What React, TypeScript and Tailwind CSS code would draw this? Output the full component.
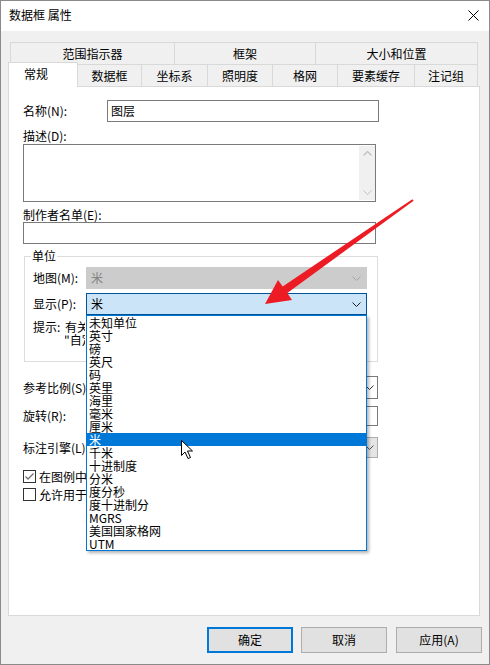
import React from "react";

const Chevron = ({ color = "#333" }: { color?: string }) => (
  <svg width="9" height="5" viewBox="0 0 9 5" className="shrink-0">
    <polyline points="0.5,0.5 4.5,4.5 8.5,0.5" fill="none" stroke={color} strokeWidth="1" />
  </svg>
);

const units = [
  "未知单位",
  "英寸",
  "磅",
  "英尺",
  "码",
  "英里",
  "海里",
  "毫米",
  "厘米",
  "米",
  "千米",
  "十进制度",
  "分米",
  "度分秒",
  "度十进制分",
  "MGRS",
  "美国国家格网",
  "UTM",
];

export default function App() {
  return (
    <div className="relative w-[490px] h-[665px] border border-[#8a8a8a] bg-[#f0f0f0] flex flex-col overflow-hidden font-['Noto_Sans_CJK_SC','Liberation_Sans',sans-serif] text-[12px] text-black">
      {/* Title bar */}
      <div className="h-[30px] bg-white flex items-center justify-between pl-[8px] pr-[10px] shrink-0">
        <span className="leading-[16px] -mt-[2px]">数据框 属性</span>
        <svg width="11" height="11" viewBox="0 0 11 11" className="-mt-[2px]">
          <line x1="0.5" y1="0.5" x2="10.5" y2="10.5" stroke="#000" strokeWidth="1" />
          <line x1="10.5" y1="0.5" x2="0.5" y2="10.5" stroke="#000" strokeWidth="1" />
        </svg>
      </div>

      {/* Tabs */}
      <div className="mt-[11px] ml-[7px] flex flex-col">
        <div className="flex ml-[2px] h-[22px]">
          <div className="w-[165px] border-t border-l border-r border-[#d9d9d9] flex items-center justify-center leading-[16px]">范围指示器</div>
          <div className="w-[141px] border-t border-r border-[#d9d9d9] flex items-center justify-center leading-[16px]">框架</div>
          <div className="w-[162px] border-t border-r border-[#d9d9d9] flex items-center justify-center leading-[16px]">大小和位置</div>
        </div>
        <div className="flex h-[22px]">
          <div className="relative z-10 w-[70px] h-[25px] -mt-[2px] bg-white border-t border-l border-r border-[#d9d9d9] pt-[3px] pl-[15px] leading-[16px]">常规</div>
          <div className="w-[64px] border-t border-r border-[#d9d9d9] flex items-center justify-center leading-[16px]">数据框</div>
          <div className="w-[66px] border-t border-r border-[#d9d9d9] flex items-center justify-center leading-[16px]">坐标系</div>
          <div className="w-[65px] border-t border-r border-[#d9d9d9] flex items-center justify-center leading-[16px]">照明度</div>
          <div className="w-[65px] border-t border-r border-[#d9d9d9] flex items-center justify-center leading-[16px]">格网</div>
          <div className="w-[77px] border-t border-r border-[#d9d9d9] flex items-center justify-center leading-[16px]">要素缓存</div>
          <div className="w-[63px] border-t border-r border-[#d9d9d9] flex items-center justify-center leading-[16px]">注记组</div>
        </div>
      </div>

      {/* Panel */}
      <div className="ml-[7px] w-[472px] h-[530px] shrink-0 border border-[#d9d9d9] bg-white pl-[14px] pt-[13px]">
        {/* Name */}
        <div className="flex items-center h-[22px]">
          <span className="w-[84px] leading-[16px]">名称(N):</span>
          <div className="w-[272px] h-[22px] border border-[#7a7a7a] pl-[3px] flex items-center leading-[16px]">图层</div>
        </div>
        <div className="mt-[6px] leading-[16px] h-[16px]">描述(D):</div>
        <div className="w-[353px] h-[58px] border border-[#7a7a7a] flex justify-end py-[1px]">
          <div className="w-[16px] h-full bg-[#f0f0f0] flex flex-col items-center justify-between py-[5px]">
            <svg width="9" height="5" viewBox="0 0 9 5">
              <polyline points="0.5,4.5 4.5,0.5 8.5,4.5" fill="none" stroke="#bfbfbf" strokeWidth="1.2" />
            </svg>
            <Chevron color="#bfbfbf" />
          </div>
        </div>
        <div className="mt-[5px] leading-[15px] h-[15px]">制作者名单(E):</div>
        <div className="w-[353px] h-[22px] border border-[#7a7a7a]" />

        {/* Units group */}
        <fieldset className="mt-[5px] ml-[1px] w-[354px] h-[113px] border border-[#dcdcdc] px-[8px]">
          <legend className="-ml-[2px] px-[1px] leading-[14px]">单位</legend>
          <div className="mt-[4px] flex items-center h-[22px]">
            <span className="w-[53px] leading-[16px]">地图(M):</span>
            <div className="w-[281px] h-[22px] bg-[#cccccc] border border-[#cccccc] pl-[4px] pr-[5px] flex items-center justify-between text-[#838383] leading-[16px]">
              <span>米</span>
              <Chevron color="#a6a6a6" />
            </div>
          </div>
          <div className="mt-[4px] flex items-center h-[22px]">
            <span className="w-[53px] leading-[16px]">显示(P):</span>
            <div className="relative w-[281px] h-[22px]">
              <div className="w-full h-full bg-[#cce4f7] border border-[#005499] pl-[4px] pr-[5px] flex items-center justify-between leading-[16px]">
                <span>米</span>
                <Chevron color="#222" />
              </div>
              {/* Dropdown list */}
              <div className="absolute left-0 top-full z-20 w-[281px] bg-white border border-[#0078d7] shadow-[2px_2px_3px_rgba(0,0,0,0.3)]">
                {units.map((u) => (
                  <div
                    key={u}
                    className={
                      u === "米"
                        ? "h-[13px] leading-[13px] pl-[2px] bg-[#0078d7] text-white whitespace-nowrap"
                        : "h-[13px] leading-[13px] pl-[2px] whitespace-nowrap"
                    }
                  >
                    {u}
                  </div>
                ))}
              </div>
            </div>
          </div>
          <div className="mt-[5px] flex leading-[13px]">
            <span className="w-[32px] shrink-0">提示:</span>
            <div className="flex flex-col w-[20px] overflow-hidden whitespace-nowrap">
              <span>有关</span>
              <span className="-ml-[1px]">"自定</span>
            </div>
          </div>
        </fieldset>

        {/* Reference scale */}
        <div className="mt-[14px] flex items-center h-[23px]">
          <span className="w-[84px] leading-[16px]">参考比例(S):</span>
          <div className="w-[271px] h-[23px] border border-[#7a7a7a] pr-[3px] flex items-center justify-end">
            <Chevron color="#333" />
          </div>
        </div>
        <div className="mt-[7px] flex items-center h-[20px]">
          <span className="w-[84px] leading-[16px]">旋转(R):</span>
          <div className="w-[271px] h-[20px] border border-[#7a7a7a]" />
        </div>
        <div className="mt-[11px] flex items-center h-[21px]">
          <span className="w-[84px] leading-[16px]">标注引擎(L):</span>
          <div className="w-[271px] h-[21px] bg-[#e5e5e5] border border-[#adadad] pr-[3px] flex items-center justify-end">
            <Chevron color="#555" />
          </div>
        </div>
        <div className="mt-[12px] flex items-center h-[13px] gap-[3px]">
          <div className="w-[13px] h-[13px] border border-[#333] flex items-center justify-center">
            <svg width="9" height="7" viewBox="0 0 9 7">
              <polyline points="0.5,3.5 3,6 8.5,0.5" fill="none" stroke="#707070" strokeWidth="1.3" />
            </svg>
          </div>
          <span className="leading-[16px] w-[47px] overflow-hidden whitespace-nowrap">在图例中</span>
        </div>
        <div className="mt-[5px] flex items-center h-[13px] gap-[3px]">
          <div className="w-[13px] h-[13px] border border-[#333]" />
          <span className="leading-[16px] w-[47px] overflow-hidden whitespace-nowrap">允许用于</span>
        </div>
      </div>

      {/* Buttons */}
      <div className="mt-[11px] flex justify-end pr-[7px] gap-[8px]">
        <div className="w-[86px] h-[26px] border-2 border-[#0078d7] bg-[#e1e1e1] flex items-center justify-center leading-[16px]">确定</div>
        <div className="w-[86px] h-[26px] border border-[#adadad] bg-[#e1e1e1] flex items-center justify-center leading-[16px]">取消</div>
        <div className="ml-[1px] w-[86px] h-[26px] border border-[#adadad] bg-[#e1e1e1] flex items-center justify-center leading-[16px]">应用(A)</div>
      </div>

      {/* Annotation overlay: red arrow and mouse cursor */}
      <svg className="absolute -left-px -top-px pointer-events-none z-30" width="490" height="665" viewBox="0 0 490 665">
        <polygon
          points="412.4,199.2 282.7,286.4 278,280 265,304 292,300 287.3,293 413.6,200.8"
          fill="#ed1c24"
        />
        <path
          d="M181.5 440.5 L181.5 455.5 L185 452 L188 458.5 L190.5 457.5 L187.5 451 L192.5 451 Z"
          fill="#fff"
          stroke="#000"
          strokeWidth="1"
          strokeLinejoin="round"
        />
      </svg>
    </div>
  );
}
